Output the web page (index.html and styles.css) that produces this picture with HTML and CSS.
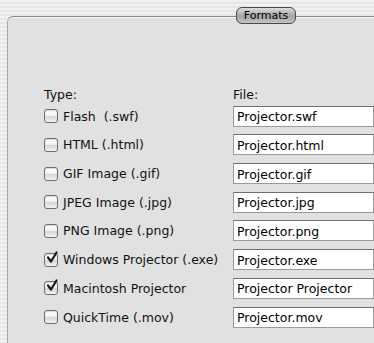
FILE: index.html
```html
<!DOCTYPE html>
<html>
<head>
  <title>Formats</title>
  <link rel="stylesheet" href="styles.css">
</head>
<body>
  <div class="box">
    <!-- tab sits on the top border -->
    <div class="tab">Formats</div>

    <div class="grid">
      <div class="head">Type:</div>
      <div class="head">File:</div>

      <label class="opt"><span class="check"></span>Flash&nbsp; (.swf)</label>
      <input type="text" class="field" value="Projector.swf">

      <label class="opt"><span class="check"></span>HTML (.html)</label>
      <input type="text" class="field" value="Projector.html">

      <label class="opt"><span class="check"></span>GIF Image (.gif)</label>
      <input type="text" class="field" value="Projector.gif">

      <label class="opt"><span class="check"></span>JPEG Image (.jpg)</label>
      <input type="text" class="field" value="Projector.jpg">

      <label class="opt"><span class="check"></span>PNG Image (.png)</label>
      <input type="text" class="field" value="Projector.png">

      <label class="opt"><span class="check on"><svg viewBox="0 0 14 14" width="14" height="14"><path d="M3 6.5 L6 10.5 L11.5 1.5" fill="none" stroke="#1a1a1a" stroke-width="2.2" stroke-linecap="round" stroke-linejoin="round"/></svg></span>Windows Projector (.exe)</label>
      <input type="text" class="field" value="Projector.exe">

      <label class="opt"><span class="check on"><svg viewBox="0 0 14 14" width="14" height="14"><path d="M3 6.5 L6 10.5 L11.5 1.5" fill="none" stroke="#1a1a1a" stroke-width="2.2" stroke-linecap="round" stroke-linejoin="round"/></svg></span>Macintosh Projector</label>
      <input type="text" class="field" value="Projector Projector">

      <label class="opt"><span class="check"></span>QuickTime (.mov)</label>
      <input type="text" class="field" value="Projector.mov">
    </div>
  </div>
</body>
</html>
```

FILE: styles.css
```css
html, body {
  height: 100%;
}

body {
  margin: 0;
  overflow: hidden;
  font-family: 'DejaVu Sans', sans-serif;
  font-size: 12.5px;
  color: #111;
  background-color: #ececec;
  background-image: repeating-linear-gradient(#f1f1f1 0 2px, #e6e6e6 2px 4px);
}

.box {
  position: relative;
  margin: 16px 0 0 7px;
  height: 100%;
  background-color: #e1e1e1;
  border-top: 1px solid #8a8a8a;
  border-left: 1px solid #a8a8a8;
  border-top-left-radius: 6px;
  box-shadow: inset 0 1px 0 #f4f4f4;
}

.tab {
  position: absolute;
  top: -10px;
  left: 228px;
  width: 60px;
  height: 17px;
  box-sizing: border-box;
  border: 1px solid #4a4a4a;
  border-radius: 6px;
  background: linear-gradient(#dcdcdc, #a4a4a4 55%, #c4c4c4);
  font-size: 11px;
  line-height: 15px;
  text-align: center;
  color: #000;
}

.grid {
  display: grid;
  grid-template-columns: 189px 1fr;
  grid-template-rows: 16px;
  grid-auto-rows: 21px;
  row-gap: 7.7px;
  padding: 65px 0 0 36px;
  align-items: center;
}

.head {
  align-self: end;
  margin-bottom: -4px;
}

.opt {
  display: flex;
  align-items: center;
  gap: 5px;
  white-space: nowrap;
}

.check {
  width: 14px;
  height: 14px;
  box-sizing: border-box;
  border: 1px solid #6e6e6e;
  border-radius: 3px;
  background: linear-gradient(#ffffff, #f2f2f2 45%, #d6d6d6 55%, #f4f4f4);
  box-shadow: inset 0 1px 1px rgba(0, 0, 0, 0.15);
  display: flex;
}

.check svg {
  margin: -3px 0 0 0;
  overflow: visible;
}

.field {
  width: 100%;
  height: 21px;
  box-sizing: border-box;
  margin: 0;
  padding: 1px 3px 0;
  border: 1px solid #9a9a9a;
  border-top-color: #6f6f6f;
  background: #fff;
  font-family: 'DejaVu Sans', sans-serif;
  font-size: 12.5px;
  color: #000;
  outline: none;
}
```
